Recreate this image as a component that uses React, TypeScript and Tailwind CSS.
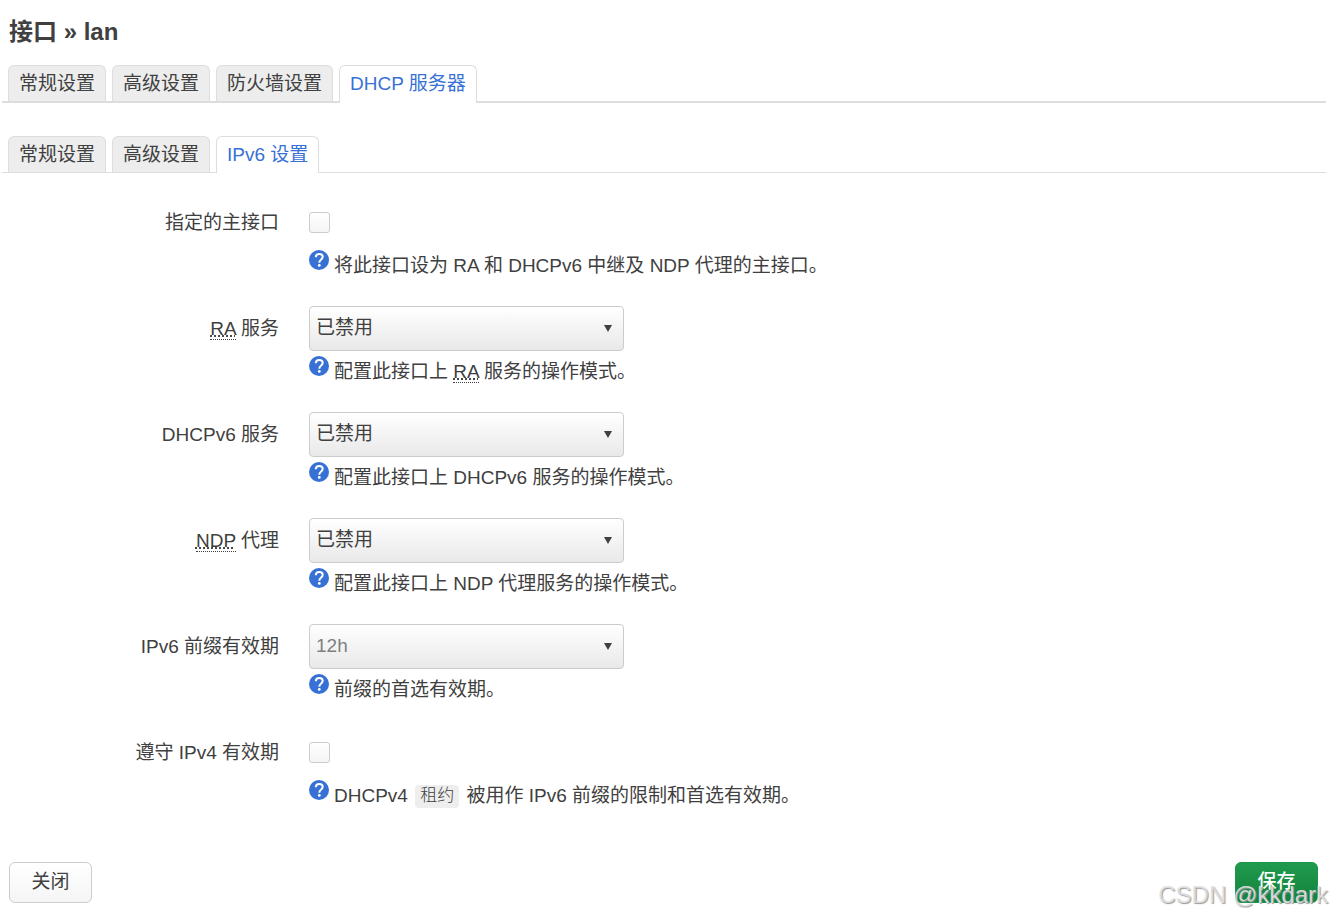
import type { ReactNode } from 'react'

const mainTabs = ['常规设置', '高级设置', '防火墙设置', 'DHCP 服务器']
const subTabs = ['常规设置', '高级设置', 'IPv6 设置']

function Tabs({ label, items, active, thick }: { label: string; items: string[]; active: string; thick?: boolean }) {
  return (
    <nav
      aria-label={label}
      className={`flex gap-1.5 border-[#ddd] pl-1.5 ${thick ? 'border-b-2' : 'border-b'}`}
    >
      {items.map((item) => (
        <a
          key={item}
          href="#"
          className={`rounded-t-md border border-b-0 border-[#ddd] px-2.5 leading-9 ${
            item === active
              ? `bg-white text-[#3771d5] ${thick ? '-mb-0.5 h-[38px]' : '-mb-px h-[37px]'}`
              : 'h-9 bg-[#ededed]'
          }`}
        >
          {item}
        </a>
      ))}
    </nav>
  )
}

function Abbr({ title, children }: { title: string; children: ReactNode }) {
  return (
    <abbr title={title} className="border-b border-dotted border-[#404040] leading-none underline decoration-dotted">
      {children}
    </abbr>
  )
}

function HelpIcon() {
  return (
    <svg viewBox="0 0 20 20" className="h-5 w-5 shrink-0" aria-hidden="true">
      <circle cx="10" cy="10" r="10" fill="#3771d5" />
      <path
        d="M6.8 7.2C6.8 5.1 8.2 3.9 10.3 3.9s3.4 1.1 3.4 2.9c0 1.5-.9 2.2-1.8 2.9-1 .7-1.6 1.4-1.6 3"
        fill="none"
        stroke="#fff"
        strokeWidth="2"
      />
      <circle cx="10.3" cy="15.4" r="1.4" fill="#fff" />
    </svg>
  )
}

function Field({ id, label, help, children }: { id: string; label: ReactNode; help: ReactNode; children: ReactNode }) {
  return (
    <div className="flex gap-[30px]">
      <label htmlFor={id} className="h-[45px] w-[277px] shrink-0 text-right leading-[45px]">
        {label}
      </label>
      <div className="min-w-0 flex-1">
        <div className="flex h-[45px] items-center">{children}</div>
        <div className="flex items-start gap-[5px] pt-[5px]">
          <HelpIcon />
          <p className="leading-8">{help}</p>
        </div>
      </div>
    </div>
  )
}

function Checkbox({ id }: { id: string }) {
  return (
    <input
      id={id}
      type="checkbox"
      className="h-[21px] w-[21px] appearance-none rounded-[3px] border border-[#ccc] bg-linear-to-b from-white to-[#f5f5f5] checked:bg-[#3771d5]"
    />
  )
}

function Select({ id, options, muted }: { id: string; options: string[]; muted?: boolean }) {
  return (
    <div className="relative w-full max-w-[315px]">
      <select
        id={id}
        className={`h-[45px] w-full appearance-none rounded border border-[#ccc] bg-linear-to-b from-white to-[#e9e9e9] px-1.5 ${
          muted ? 'text-[#808080]' : 'text-[#404040]'
        }`}
      >
        {options.map((option) => (
          <option key={option}>{option}</option>
        ))}
      </select>
      <svg viewBox="0 0 8 7" className="pointer-events-none absolute top-[19px] right-3 h-[7px] w-2" aria-hidden="true">
        <path d="M0 0h8L4 7z" fill="#404040" />
      </svg>
    </div>
  )
}

export default function App() {
  const modes = ['已禁用', '服务器模式', '中继模式', '混合模式']

  return (
    <div className="bg-white pt-3.5 pr-1.5 pl-0.5 font-['Liberation_Sans','Noto_Sans_CJK_SC',sans-serif] text-[19px] text-[#404040]">
      <h4 className="pl-[7px] text-2xl leading-9 font-bold">接口 » lan</h4>

      <div className="mt-[15px]">
        <Tabs label="接口" items={mainTabs} active="DHCP 服务器" thick />
      </div>
      <div className="mt-[33px]">
        <Tabs label="DHCP 服务器" items={subTabs} active="IPv6 设置" />
      </div>

      <form className="mt-[27px] flex flex-col gap-6">
        <Field id="master" label="指定的主接口" help="将此接口设为 RA 和 DHCPv6 中继及 NDP 代理的主接口。">
          <Checkbox id="master" />
        </Field>
        <Field
          id="ra"
          label={<><Abbr title="Router Advertisement">RA</Abbr> 服务</>}
          help={<>配置此接口上 <Abbr title="Router Advertisement">RA</Abbr> 服务的操作模式。</>}
        >
          <Select id="ra" options={modes} />
        </Field>
        <Field id="dhcpv6" label="DHCPv6 服务" help="配置此接口上 DHCPv6 服务的操作模式。">
          <Select id="dhcpv6" options={modes} />
        </Field>
        <Field
          id="ndp"
          label={<><Abbr title="Neighbour Discovery Protocol">NDP</Abbr> 代理</>}
          help="配置此接口上 NDP 代理服务的操作模式。"
        >
          <Select id="ndp" options={modes} />
        </Field>
        <Field id="lifetime" label="IPv6 前缀有效期" help="前缀的首选有效期。">
          <Select id="lifetime" options={['12h', '24h']} muted />
        </Field>
        <Field
          id="leasetime"
          label="遵守 IPv4 有效期"
          help={
            <>
              DHCPv4{' '}
              <code className="mx-0.5 inline-block rounded bg-[#eee] px-[5px] align-middle font-['Liberation_Mono','Noto_Sans_CJK_SC',monospace] text-[17px] leading-[23px] font-light">
                租约
              </code>{' '}
              被用作 IPv6 前缀的限制和首选有效期。
            </>
          }
        >
          <Checkbox id="leasetime" />
        </Field>
      </form>

      <div className="mt-[50px] flex justify-between pr-2 pb-3.5 pl-[7px]">
        <button
          type="button"
          className="h-[41px] min-w-[83px] rounded-md border border-[#ccc] bg-linear-to-b from-white to-[#f5f5f5] px-5"
        >
          关闭
        </button>
        <button
          type="button"
          className="h-[41px] min-w-[83px] rounded-md border border-[#1c9549] bg-linear-to-b from-[#1f9b4e] to-[#15803c] px-5 font-medium text-white"
        >
          保存
        </button>
      </div>

      <span className="pointer-events-none absolute top-[879px] right-1 text-2xl leading-8 text-[#e2e2e2]/90 [text-shadow:1px_1px_1px_#999]">
        CSDN @kkdark
      </span>
    </div>
  )
}
